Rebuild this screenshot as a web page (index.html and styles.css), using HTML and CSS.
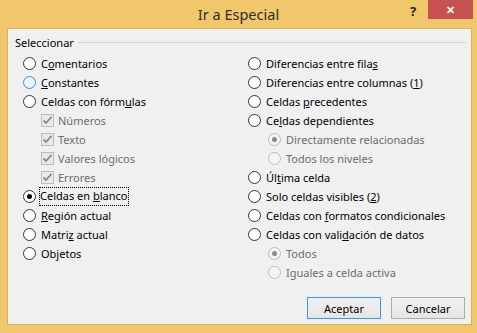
FILE: index.html
```html
<!DOCTYPE html>
<html lang="es">
<head>
  <meta charset="UTF-8">
  <title>Ir a Especial</title>
  <link rel="stylesheet" href="styles.css">
</head>
<body>
  <div class="window">
    <div class="titlebar">
      <span class="title">Ir a Especial</span>
      <span class="help">?</span>
      <span class="close">&#x2715;</span>
    </div>

    <div class="client">
      <div class="group-head">
        <span>Seleccionar</span>
        <span class="group-line"></span>
      </div>

      <div class="columns">
        <div class="col">
          <div class="row"><span class="radio"></span><span>C<u>o</u>mentarios</span></div>
          <div class="row"><span class="radio hover"></span><span><u>C</u>onstantes</span></div>
          <div class="row"><span class="radio"></span><span>Celdas con fórm<u>u</u>las</span></div>
          <div class="row sub off"><span class="check"><svg width="11" height="11" viewBox="0 0 11 11"><path d="M1.5 5.5 L4 8 L9.5 1.8" fill="none" stroke="#8a8a8a" stroke-width="1.8"/></svg></span><span>Números</span></div>
          <div class="row sub off"><span class="check"><svg width="11" height="11" viewBox="0 0 11 11"><path d="M1.5 5.5 L4 8 L9.5 1.8" fill="none" stroke="#8a8a8a" stroke-width="1.8"/></svg></span><span>Texto</span></div>
          <div class="row sub off"><span class="check"><svg width="11" height="11" viewBox="0 0 11 11"><path d="M1.5 5.5 L4 8 L9.5 1.8" fill="none" stroke="#8a8a8a" stroke-width="1.8"/></svg></span><span>Valores lógicos</span></div>
          <div class="row sub off"><span class="check"><svg width="11" height="11" viewBox="0 0 11 11"><path d="M1.5 5.5 L4 8 L9.5 1.8" fill="none" stroke="#8a8a8a" stroke-width="1.8"/></svg></span><span>Errores</span></div>
          <div class="row"><span class="radio on"></span><span class="focus">Celdas en <u>b</u>lanco</span></div>
          <div class="row"><span class="radio"></span><span><u>R</u>egión actual</span></div>
          <div class="row"><span class="radio"></span><span>Matri<u>z</u> actual</span></div>
          <div class="row"><span class="radio"></span><span>Ob<u>j</u>etos</span></div>
        </div>

        <div class="col">
          <div class="row"><span class="radio"></span><span>Diferencias entre fila<u>s</u></span></div>
          <div class="row"><span class="radio"></span><span>Diferencias entre columnas (<u>1</u>)</span></div>
          <div class="row"><span class="radio"></span><span>Celdas <u>p</u>recedentes</span></div>
          <div class="row"><span class="radio"></span><span>Ce<u>l</u>das dependientes</span></div>
          <div class="row subr off"><span class="radio on"></span><span>Directamente relacionadas</span></div>
          <div class="row subr off"><span class="radio"></span><span>Todos los niveles</span></div>
          <div class="row"><span class="radio"></span><span>Úl<u>t</u>ima celda</span></div>
          <div class="row"><span class="radio"></span><span>Solo celdas visibles (<u>2</u>)</span></div>
          <div class="row"><span class="radio"></span><span>Celdas con <u>f</u>ormatos condicionales</span></div>
          <div class="row"><span class="radio"></span><span>Celdas con vali<u>d</u>ación de datos</span></div>
          <div class="row subr off"><span class="radio on"></span><span>Todos</span></div>
          <div class="row subr off"><span class="radio"></span><span>Iguales a celda activa</span></div>
        </div>
      </div>

      <div class="buttons">
        <button class="btn default">Aceptar</button>
        <button class="btn">Cancelar</button>
      </div>
    </div>
  </div>
</body>
</html>
```

FILE: styles.css
```css
body {
  margin: 0;
  font-family: 'Noto Sans', 'Open Sans', sans-serif;
  font-size: 11px;
  color: #000;
}

.window {
  width: 477px;
  height: 333px;
  background-color: #f0c76a;
  box-sizing: border-box;
}

.titlebar {
  height: 29px;
  position: relative;
  text-align: center;
}

.title {
  display: inline-block;
  font-size: 14.5px;
  line-height: 29px;
  color: #2e2e2e;
}

.help {
  position: absolute;
  left: 410px;
  top: 2px;
  font-weight: bold;
  font-size: 13px;
  color: #222;
}

.close {
  position: absolute;
  left: 428px;
  top: 0;
  width: 45px;
  height: 19px;
  line-height: 19px;
  background-color: #c75050;
  color: #fff;
  font-size: 11px;
  font-weight: bold;
}

.client {
  margin-left: 8px;
  width: 463px;
  height: 295px;
  background-color: #f0f0f0;
  box-shadow: 0 0 0 1px #d9b358;
}

.group-head {
  display: flex;
  align-items: center;
  padding: 6px 5px 0 7px;
  height: 16px;
  line-height: 16px;
  margin-bottom: 3px;
}

.group-line {
  flex: 1;
  height: 1px;
  margin-left: 4px;
  margin-top: -1px;
  background-color: #d5d5d5;
}

.columns {
  display: grid;
  grid-template-columns: 225px 1fr;
  padding-left: 15px;
  height: 228px;
}

.row {
  display: flex;
  align-items: center;
  height: 19px;
  white-space: nowrap;
}

.row.sub {
  padding-left: 18px;
}

.row.subr {
  padding-left: 20px;
}

.off {
  color: #6d6d6d;
}

.radio {
  width: 13px;
  height: 13px;
  box-sizing: border-box;
  border: 1px solid #333;
  border-radius: 50%;
  background-color: #fff;
  margin-right: 5px;
  display: flex;
  align-items: center;
  justify-content: center;
  flex: none;
}

.radio.hover {
  border-color: #3c8ee8;
  background-color: #eaf4ff;
}

.radio.on::after {
  content: "";
  width: 5px;
  height: 5px;
  border-radius: 50%;
  background-color: #000;
}

.off .radio {
  border-color: #bcbcbc;
  background-color: #f4f4f4;
}

.off .radio.on::after {
  background-color: #8a8a8a;
}

.check {
  width: 13px;
  height: 13px;
  box-sizing: border-box;
  border: 1px solid #bcbcbc;
  background-color: #e9e9e9;
  margin-right: 4px;
  display: flex;
  align-items: center;
  justify-content: center;
  flex: none;
}

.focus {
  outline: 1px dotted #000;
  outline-offset: 0;
  padding: 0 1px 1px 0;
  margin-left: -1px;
  line-height: 16px;
}

.buttons {
  display: flex;
  justify-content: flex-end;
  gap: 10px;
  padding-right: 6px;
  margin-top: 15px;
}

.btn {
  width: 74px;
  height: 22px;
  font-family: inherit;
  font-size: 11px;
  color: #000;
  border: 1px solid #acacac;
  background: linear-gradient(#f0f0f0, #e5e5e5);
  padding: 0;
}

.btn.default {
  border-color: #3399ff;
}
```
